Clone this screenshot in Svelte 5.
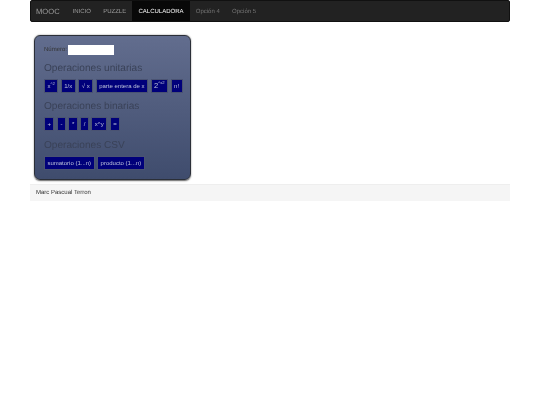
<script>
    const binary = ["+", "-", "*", "/", "x^y", "="];
    const csv = ["sumatorio (1...n)", "producto (1...n)"];
</script>

<div class="container">
    <nav class="navbar">
        <span class="brand">MOOC</span>
        <a href="#inicio">INICIO</a>
        <a href="#puzzle">PUZZLE</a>
        <a href="#calc" class="active">CALCULADORA</a>
        <a href="#op4" class="dim">Opción 4</a>
        <a href="#op5" class="dim">Opción 5</a>
    </nav>

    <section class="panel">
        <div class="field">
            <label for="num">Número:</label>
            <input id="num" type="text" />
        </div>

        <h3>Operaciones unitarias</h3>
        <div class="buttons">
            <button>x<sup>^2</sup></button>
            <button>1/x</button>
            <button>√ x</button>
            <button>parte entera de x</button>
            <button class="big">2<sup>^x2</sup></button>
            <button>n!</button>
        </div>

        <h3>Operaciones binarias</h3>
        <div class="buttons">
            {#each binary as op}
                <button>{op}</button>
            {/each}
        </div>

        <h3>Operaciones CSV</h3>
        <div class="buttons">
            {#each csv as op}
                <button>{op}</button>
            {/each}
        </div>
    </section>

    <footer>Marc Pascual Terron</footer>
</div>

<style>
    :global(body) {
        margin: 0;
        background: #fff;
        font-family: "Liberation Sans", Arial, sans-serif;
        text-rendering: geometricPrecision;
    }

    .container {
        width: 480px;
        margin: 0 auto;
        filter: blur(0.35px);
    }

    /* navbar */
    .navbar {
        display: flex;
        align-items: stretch;
        height: 22px;
        box-sizing: border-box;
        background: #222;
        border: 1px solid #111;
        border-radius: 2px;
        padding-left: 5px;
        font-size: 6px;
    }

    .brand {
        font-size: 7.6px;
        color: #9d9d9d;
        align-self: center;
        margin-right: 6.8px;
    }

    .navbar a {
        color: #9d9d9d;
        text-decoration: none;
        display: flex;
        align-items: center;
        padding: 1px 6.15px 0;
    }

    .navbar a.active {
        color: #fff;
        background: #080808;
    }

    .navbar a.dim {
        color: #777;
    }

    /* calculator */
    .panel {
        width: 157.5px;
        height: 145px;
        box-sizing: border-box;
        margin: 12.5px 0 4.5px 3.5px;
        padding: 9px 9px 0 9.5px;
        background: linear-gradient(#626d8e, #3f4c6d);
        border: 1px solid #2b2f38;
        border-radius: 6px;
        box-shadow: 0 0.5px 1.5px #666;
    }

    .field {
        display: flex;
        align-items: center;
        gap: 0.8px;
        height: 10px;
    }

    label {
        font-size: 6px;
        color: #333;
    }

    input {
        width: 46px;
        height: 10px;
        box-sizing: border-box;
        border: none;
        padding: 0;
        background: #fff;
    }

    h3 {
        margin: 7.4px 0 4px;
        font-size: 10.1px;
        line-height: 13px;
        font-weight: 400;
        color: #3a4258;
    }

    .buttons {
        display: flex;
        gap: 2.6px;
    }

    button {
        height: 14px;
        padding: 0 2.45px;
        box-sizing: border-box;
        background: #00007a;
        color: #bcc2da;
        border: 1px solid #4a5372;
        font: 6px "Liberation Sans", Arial, sans-serif;
        white-space: nowrap;
    }

    sup {
        font-size: 4.2px;
        line-height: 0;
    }

    .big {
        font-size: 7.6px;
    }

    footer {
        height: 17px;
        box-sizing: border-box;
        padding: 5px 6px 0;
        background: #f5f5f5;
        border-top: 1px solid #eee;
        font-size: 6px;
        color: #333;
    }
</style>
